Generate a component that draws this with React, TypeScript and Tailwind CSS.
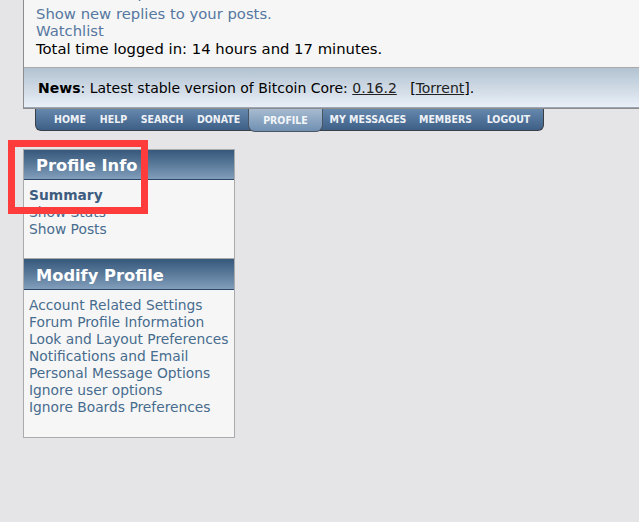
import React from "react";

const menuFont = "font-['DejaVu_Sans_Condensed','DejaVu_Sans',sans-serif] font-stretch-condensed text-[10.5px] font-bold";

const MenuItem = ({ label, w }: { label: string; w: string }) => (
  <div className={`${w} flex items-center justify-center pt-[1px] ${menuFont} text-[#eef2f7] whitespace-nowrap`}>{label}</div>
);

export default function App() {
  return (
    <div className="relative w-[639px] h-[522px] overflow-hidden bg-[#e5e5e8] font-['DejaVu_Sans',Verdana,sans-serif]">
      {/* top box */}
      <div className="ml-[23px] w-[700px] -mt-[13px] border-l border-b border-[#8c8c8c]">
        <div className="h-[81px] border-b border-[#aaaaaa] bg-[#f6f6f6] pl-[12px] text-[14.8px] leading-[17.7px] text-black overflow-hidden">
          <div className="h-[17.7px] -translate-y-[3px] text-[#5577a0]">Show unread posts since last visit.</div>
          <div className="text-[#5577a0]">Show new replies to your posts.</div>
          <div className="text-[#5577a0]">Watchlist</div>
          <div>Total time logged in: 14 hours and 17 minutes.</div>
        </div>
        <div className="h-[40px] border-b border-[#9ba5b3] bg-gradient-to-b from-[#b3c3d2] to-[#e9eff7] pl-[14px] pt-[2px] flex items-center text-[14px] text-black whitespace-nowrap">
          <span className="font-bold">News</span>:&nbsp;Latest stable version of Bitcoin Core:&nbsp;<span className="underline text-[#222]">0.16.2</span>&nbsp;&nbsp;&nbsp;[<span className="underline text-[#222]">Torrent</span>].
        </div>
      </div>

      {/* menu */}
      <div className="ml-[35px] w-[509px] h-[22px] flex rounded-b-[6px] border-l border-r border-b border-[#3a3f46] bg-gradient-to-b from-[#6688ad] to-[#3e5f86]">
        <div className="w-[12px]" />
        <MenuItem label="HOME" w="w-[44px]" />
        <MenuItem label="HELP" w="w-[43px]" />
        <MenuItem label="SEARCH" w="w-[54px]" />
        <MenuItem label="DONATE" w="w-[59px]" />
        <div className={`w-[75px] h-[23px] flex items-center justify-center pt-[1px] rounded-b-[7px] border-l border-r border-b border-[#4a5563] bg-gradient-to-b from-[#a7bbd0] to-[#7090b2] ${menuFont} text-[#f2f5f9]`}>
          PROFILE
        </div>
        <MenuItem label="MY MESSAGES" w="w-[90px]" />
        <MenuItem label="MEMBERS" w="w-[65px]" />
        <MenuItem label="LOGOUT" w="w-[61px]" />
      </div>

      {/* sidebar */}
      <div className="ml-[23px] mt-[18px] w-[212px] border border-[#aaaaaa] bg-[#f6f6f6] text-[13.8px] leading-[17px]">
        <div className="h-[30px] border-b border-[#2c4866] bg-gradient-to-b from-[#36587b] to-[#819ebb] pl-[12px] pt-[2px] flex items-center text-[16.3px] font-bold text-white">
          Profile Info
        </div>
        <div className="h-[79px] border-b border-[#aaaaaa] pt-[7px] pl-[5px]">
          <div className="font-bold text-[#3d5d80]">Summary</div>
          <div className="text-[#476c8e]">Show Stats</div>
          <div className="text-[#476c8e]">Show Posts</div>
        </div>
        <div className="h-[31px] border-b border-[#2c4866] bg-gradient-to-b from-[#36587b] to-[#819ebb] pl-[12px] pt-[2px] flex items-center text-[16.3px] font-bold text-white">
          Modify Profile
        </div>
        <div className="h-[147px] pt-[7px] pl-[5px] text-[#476c8e]">
          <div>Account Related Settings</div>
          <div>Forum Profile Information</div>
          <div>Look and Layout Preferences</div>
          <div>Notifications and Email</div>
          <div>Personal Message Options</div>
          <div>Ignore user options</div>
          <div>Ignore Boards Preferences</div>
        </div>
      </div>

      {/* red annotation */}
      <div className="absolute left-[8px] top-[140px] w-[140px] h-[74px] border-[7px] border-[#ff3c3c]" />
    </div>
  );
}
